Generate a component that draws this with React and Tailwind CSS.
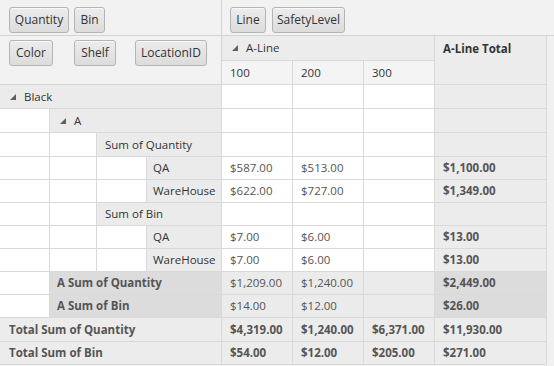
const FONT = { fontFamily: '"Open Sans", "Noto Sans", sans-serif' }

function Tri() {
  return (
    <svg width="6" height="6" viewBox="0 0 6 6" className="mr-[8px] shrink-0">
      <polygon points="6,0 6,6 0,6" fill="#606060" />
    </svg>
  )
}

function Chip({ label, w }) {
  return (
    <div
      className={`${w} flex h-[26px] items-center justify-center rounded-[3px] border border-[#b4b4b4] bg-gradient-to-b from-[#ececec] to-[#dcdcdc] text-[12px] text-[#333] shadow-[inset_0_1px_0_#f8f8f8]`}
    >
      {label}
    </div>
  )
}

function Cell({ children, span = '', bg = 'bg-white', bold = false, pl = 'pl-[8px]', text = 'text-[#555]' }) {
  return (
    <div
      className={`${span} ${bg} ${pl} ${text} ${bold ? 'font-bold text-[#333]' : ''} flex items-center border-b border-r border-[#d9d9d9] whitespace-nowrap overflow-hidden`}
    >
      {children}
    </div>
  )
}

const Blank = ({ bg = 'bg-white' }) => <Cell bg={bg} />

export default function App() {
  const labelBg = 'bg-[#ebebeb]'
  const subBg = 'bg-[#dcdcdc]'
  const totBg = 'bg-[#ececec]'

  const dataRow = (vals, total, opts = {}) => (
    <>
      {vals.map((v, i) => (
        <Cell key={i} bg={opts.bg ?? 'bg-white'} bold={opts.bold}>
          {v}
        </Cell>
      ))}
      <Cell bg={opts.totalBg ?? totBg} bold>
        {total}
      </Cell>
    </>
  )

  return (
    <div className="h-[366px] w-[554px] overflow-hidden bg-[#f0f0f0] text-[11.5px] text-[#333]" style={FONT}>
      <div className="flex h-[36px] border-b border-[#d4d4d4] bg-[#f2f2f2]">
        <div className="flex w-[222px] gap-[5px] border-r border-[#d4d4d4] pl-[9px] pt-[7px]">
          <Chip label="Quantity" w="w-[60px]" />
          <Chip label="Bin" w="w-[31px]" />
        </div>
        <div className="flex gap-[6px] pl-[8px] pt-[7px]">
          <Chip label="Line" w="w-[36px]" />
          <Chip label="SafetyLevel" w="w-[73px]" />
        </div>
      </div>

      <div className="grid grid-cols-[50px_47px_50px_75px_71px_71px_71px_112px_7px] grid-rows-[25px_24px_24px_24px_24px_23px_23px_23px_23px_23px_23px_23px_24px_23px]">
        <div className="col-span-4 row-span-2 flex border-b border-r border-[#d4d4d4] bg-[#f2f2f2] pl-[9px] pt-[4px]">
          <Chip label="Color" w="w-[44px]" />
          <div className="ml-[21px]">
            <Chip label="Shelf" w="w-[42px]" />
          </div>
          <div className="ml-[19px]">
            <Chip label="LocationID" w="w-[72px]" />
          </div>
        </div>
        <Cell span="col-span-3" bg={totBg} text="text-[#333]" pl="pl-[10px]">
          <Tri />A-Line
        </Cell>
        <div className="row-span-2 border-b border-r border-[#d9d9d9] bg-[#ececec] pl-[8px] pt-[4px] font-bold text-[#333]">
          A-Line Total
        </div>
        <div className="col-start-9 row-start-1 row-end-[15] bg-[#f0f0f0]" />
        <Cell bg="bg-[#f4f4f4]" text="text-[#333]">100</Cell>
        <Cell bg="bg-[#f4f4f4]" text="text-[#333]">200</Cell>
        <Cell bg="bg-[#f4f4f4]" text="text-[#333]">300</Cell>

        <Cell span="col-span-4" bg={labelBg} text="text-[#333]" pl="pl-[10px]">
          <Tri />Black
        </Cell>
        {dataRow(['', '', ''], '')}

        <Blank />
        <Cell span="col-span-3" bg={labelBg} text="text-[#333]" pl="pl-[10px]">
          <Tri />A
        </Cell>
        {dataRow(['', '', ''], '')}

        <Blank />
        <Blank />
        <Cell span="col-span-2" bg={labelBg} text="text-[#333]">Sum of Quantity</Cell>
        {dataRow(['', '', ''], '')}

        <Blank />
        <Blank />
        <Blank />
        <Cell bg={labelBg} text="text-[#333]" pl="pl-[6px]">QA</Cell>
        {dataRow(['$587.00', '$513.00', ''], '$1,100.00')}

        <Blank />
        <Blank />
        <Blank />
        <Cell bg={labelBg} text="text-[#333]" pl="pl-[6px]">WareHouse</Cell>
        {dataRow(['$622.00', '$727.00', ''], '$1,349.00')}

        <Blank />
        <Blank />
        <Cell span="col-span-2" bg={labelBg} text="text-[#333]">Sum of Bin</Cell>
        {dataRow(['', '', ''], '')}

        <Blank />
        <Blank />
        <Blank />
        <Cell bg={labelBg} text="text-[#333]" pl="pl-[6px]">QA</Cell>
        {dataRow(['$7.00', '$6.00', ''], '$13.00')}

        <Blank />
        <Blank />
        <Blank />
        <Cell bg={labelBg} text="text-[#333]" pl="pl-[6px]">WareHouse</Cell>
        {dataRow(['$7.00', '$6.00', ''], '$13.00')}

        <Blank />
        <Cell span="col-span-3" bg={subBg} bold pl="pl-[7px]">A Sum of Quantity</Cell>
        {dataRow(['$1,209.00', '$1,240.00', ''], '$2,449.00', { bg: 'bg-[#ebebeb]', totalBg: subBg })}

        <Blank />
        <Cell span="col-span-3" bg={subBg} bold pl="pl-[7px]">A Sum of Bin</Cell>
        {dataRow(['$14.00', '$12.00', ''], '$26.00', { bg: 'bg-[#ebebeb]', totalBg: subBg })}

        <Cell span="col-span-4" bg={totBg} bold pl="pl-[9px]">Total Sum of Quantity</Cell>
        {dataRow(['$4,319.00', '$1,240.00', '$6,371.00'], '$11,930.00', { bg: totBg, bold: true })}

        <Cell span="col-span-4" bg={totBg} bold pl="pl-[9px]">Total Sum of Bin</Cell>
        {dataRow(['$54.00', '$12.00', '$205.00'], '$271.00', { bg: totBg, bold: true })}
      </div>
    </div>
  )
}
